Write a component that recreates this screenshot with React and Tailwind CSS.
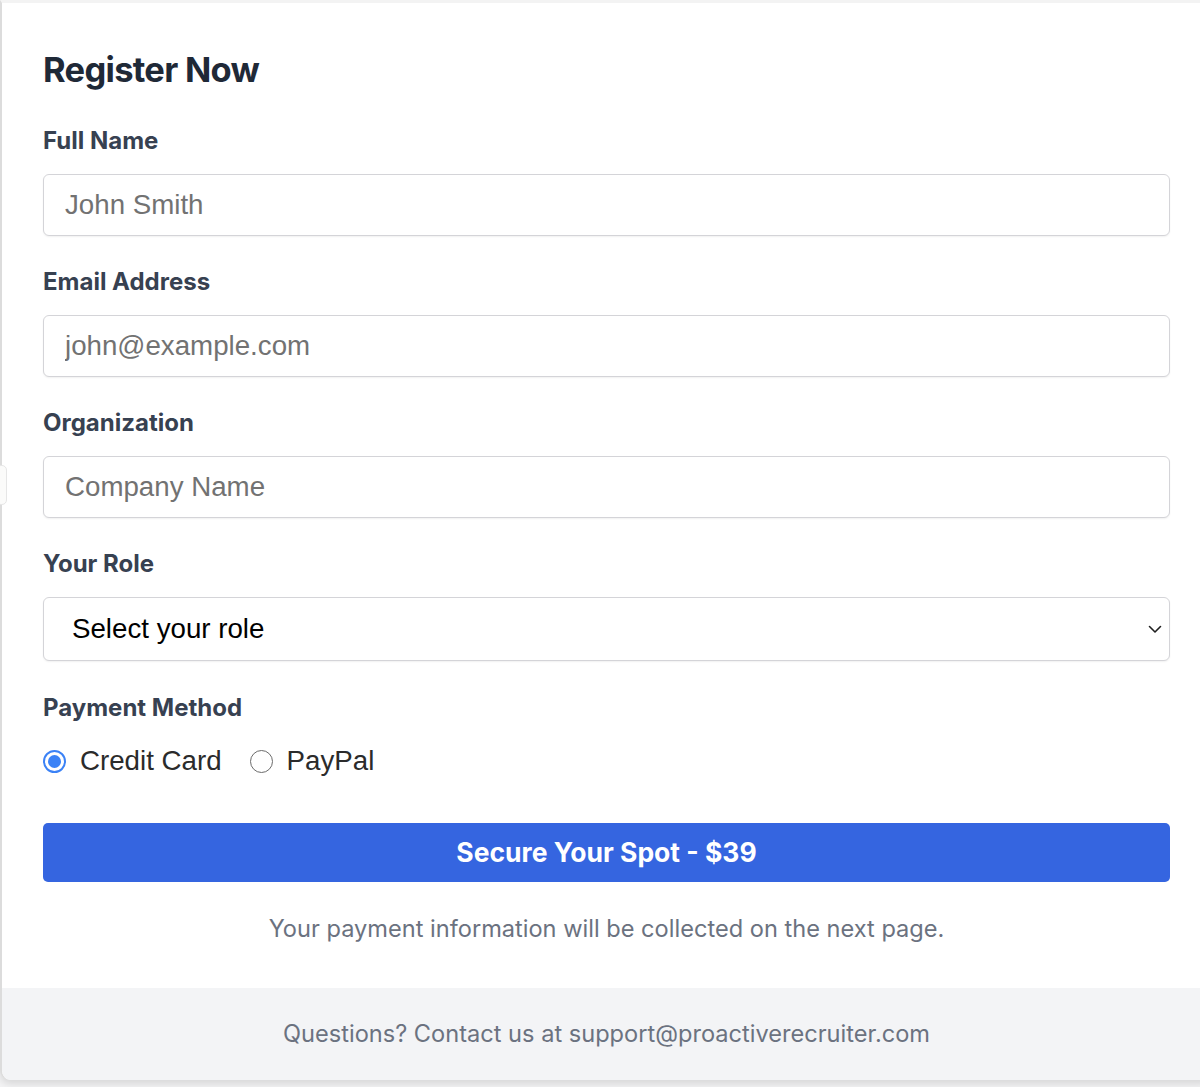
import React from "react";

function Label({ children }) {
  return (
    <div className="text-[24px] leading-[32px] font-bold text-[#374151] mb-[17px]">
      {children}
    </div>
  );
}

function TextInput({ placeholder }) {
  return (
    <input
      type="text"
      placeholder={placeholder}
      className="block w-full h-[62px] rounded-[6px] border-[1.5px] border-[#d4d4d8] bg-white px-[21px] text-[27.7px] text-black placeholder:text-[#727272] shadow-[0_1px_2px_rgba(0,0,0,0.06)] outline-none"
      style={{ fontFamily: '"Liberation Sans", Arial, sans-serif' }}
    />
  );
}

function Radio({ checked, label }) {
  return (
    <label className="flex items-center gap-[14px]">
      {checked ? (
        <span className="flex h-[23px] w-[23px] items-center justify-center rounded-full border-[2px] border-[#3b82f6] bg-white">
          <span className="h-[13px] w-[13px] rounded-full bg-[#3b82f6]" />
        </span>
      ) : (
        <span className="h-[23px] w-[23px] rounded-full border-[1.5px] border-[#6b6b6b] bg-white" />
      )}
      <span
        className="text-[27.7px] leading-[36px] text-[#2b2b2b]"
        style={{ fontFamily: '"Liberation Sans", Arial, sans-serif' }}
      >
        {label}
      </span>
    </label>
  );
}

export default function App() {
  return (
    <div
      className="relative min-h-[1087px] w-[1200px] overflow-hidden bg-[#f4f4f5]"
      style={{ fontFamily: 'Inter, "Noto Sans", sans-serif' }}
    >
      <div className="absolute z-10 left-[-4px] top-[465px] h-[40px] w-[11px] rounded-[5px] border border-[#e6e6e6] bg-[#fbfbfa]" />
      <div className="relative w-[1211px] overflow-hidden rounded-b-[10px] border-l-[2px] border-t-[3px] border-l-[#dcdcdc] border-t-[#f3f3f3] bg-white shadow-[0_4px_8px_rgba(0,0,0,0.12)]">
        <div className="px-[41px] pt-[43px] pb-[41px]">
          <h2 className="text-[34.5px] leading-[48px] font-bold text-[#1f2937] tracking-[-0.7px] mb-[31px]">
            Register Now
          </h2>

          <div className="mb-[30px]">
            <Label>Full Name</Label>
            <TextInput placeholder="John Smith" />
          </div>
          <div className="mb-[30px]">
            <Label>Email Address</Label>
            <TextInput placeholder="john@example.com" />
          </div>
          <div className="mb-[30px]">
            <Label>Organization</Label>
            <TextInput placeholder="Company Name" />
          </div>
          <div className="mb-[31px]">
            <Label>Your Role</Label>
            <div className="relative">
              <select
                className="block w-full h-[64px] appearance-none rounded-[6px] border-[1.5px] border-[#d4d4d8] bg-white pl-[28px] text-[27.7px] text-black shadow-[0_1px_2px_rgba(0,0,0,0.06)] outline-none"
                style={{ fontFamily: '"Liberation Sans", Arial, sans-serif' }}
                defaultValue=""
              >
                <option value="">Select your role</option>
              </select>
              <svg
                className="pointer-events-none absolute right-[7px] top-1/2 -translate-y-1/2"
                width="16"
                height="16"
                viewBox="0 0 16 16"
                fill="none"
              >
                <path d="M2.5 5.5 8 11l5.5-5.5" stroke="#1f1f1f" strokeWidth="1.6" strokeLinecap="round" strokeLinejoin="round" />
              </svg>
            </div>
          </div>

          <div>
            <div className="text-[24px] leading-[32px] font-bold text-[#374151]">Payment Method</div>
            <div className="mt-[19px] flex items-center gap-[28px]">
              <Radio checked label="Credit Card" />
              <Radio label="PayPal" />
            </div>
          </div>

          <button className="mt-[44px] block w-full h-[59px] rounded-[5px] bg-[#3565e0] text-[26.5px] font-bold text-white">
            Secure Your Spot - $39
          </button>

          <p className="mt-[29px] text-center text-[23.6px] leading-[36px] text-[#6b7280]">
            Your payment information will be collected on the next page.
          </p>
        </div>
        <div className="bg-[#f3f4f6] h-[92px] flex items-center justify-center">
          <p className="text-[23.6px] leading-[36px] text-[#6b7280]">
            Questions? Contact us at support@proactiverecruiter.com
          </p>
        </div>
      </div>
    </div>
  );
}
